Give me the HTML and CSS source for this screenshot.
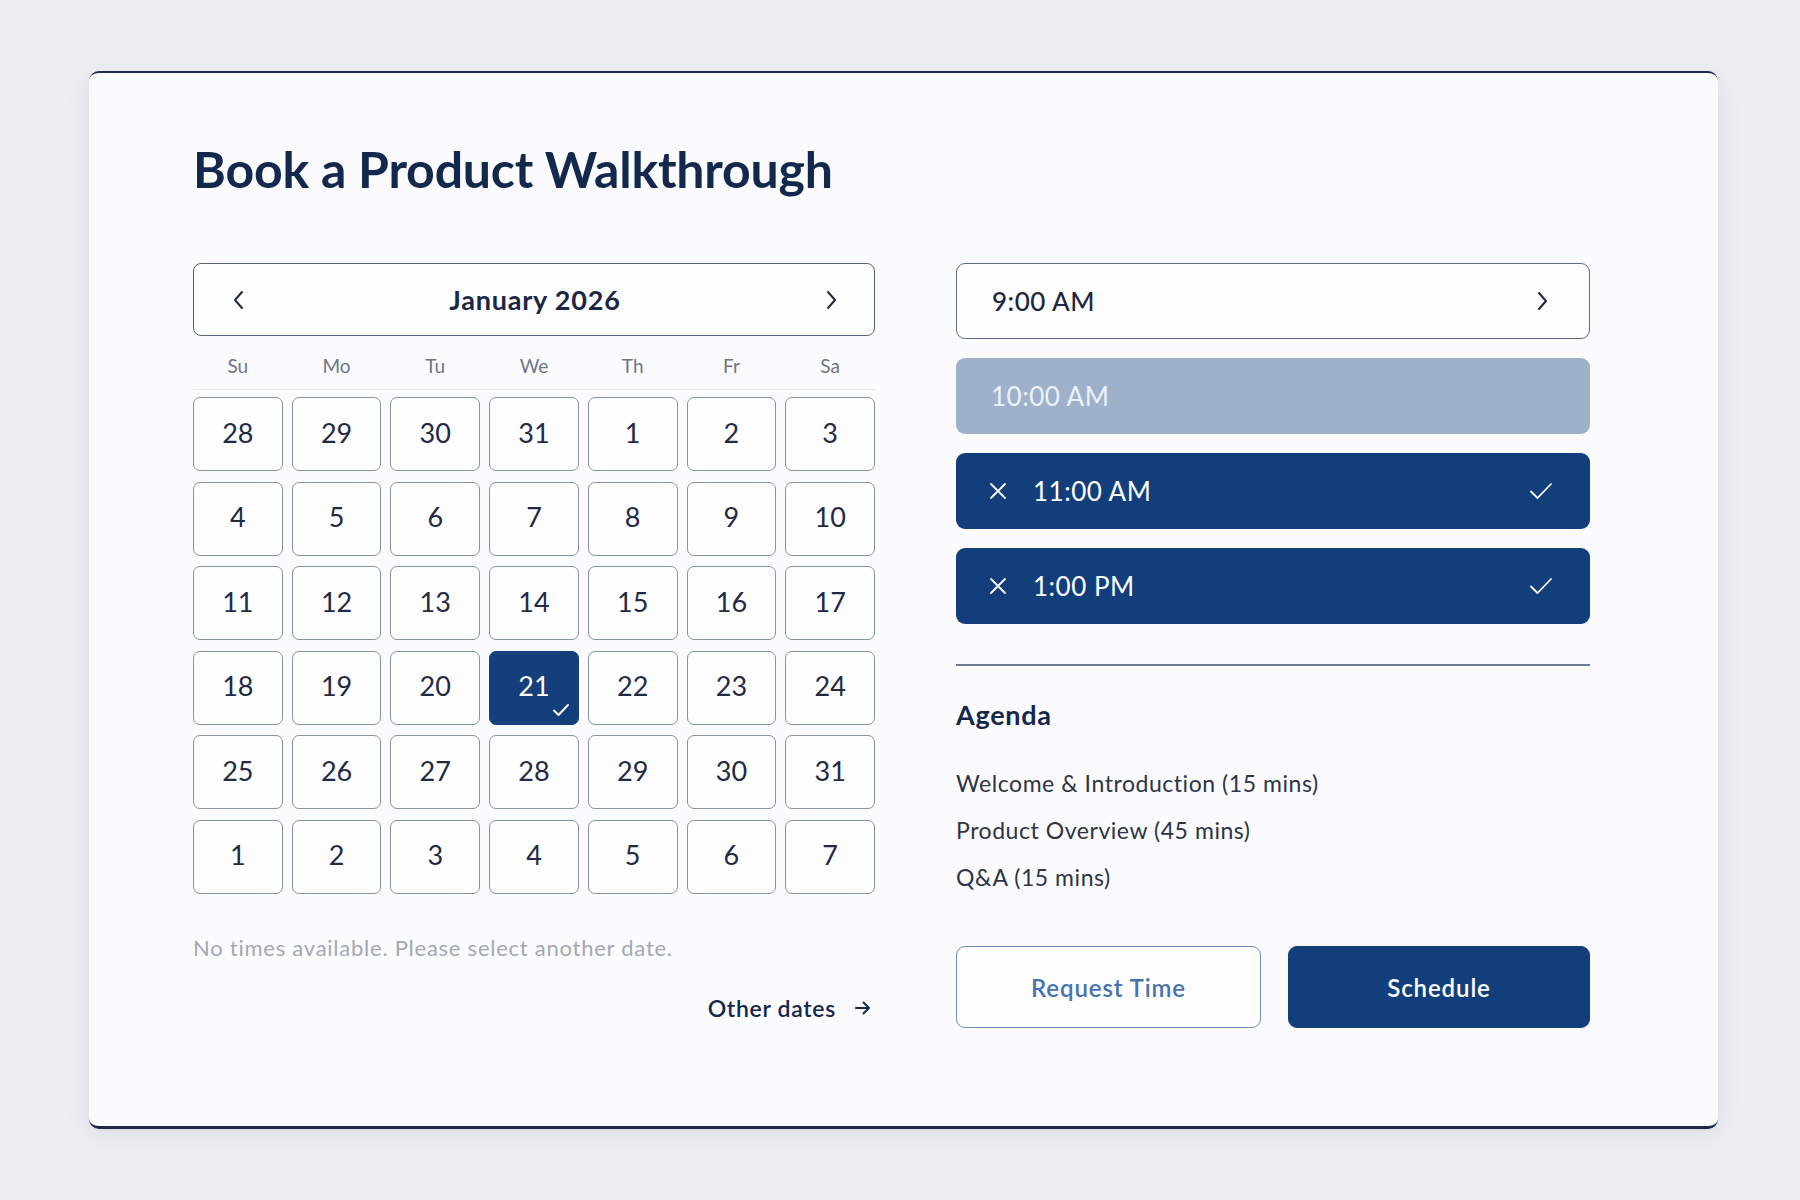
FILE: index.html
```html
<!DOCTYPE html>
<html lang="en">
<head>
<meta charset="utf-8">
<title>Book a Product Walkthrough</title>
<link rel="stylesheet" href="styles.css">
</head>
<body>
<div class="page">
  <section class="card">
    <h1 class="title">Book a Product Walkthrough</h1>
    <div class="main">
      <div class="cal-col">
        <div class="cal-head">
          <svg class="chev" width="13" height="22" viewBox="0 0 13 22"><path d="M10 3 L3 11 L10 19" fill="none" stroke="#1c2740" stroke-width="2" stroke-linecap="round" stroke-linejoin="round"/></svg>
          <span class="month">January 2026</span>
          <svg class="chev" width="13" height="22" viewBox="0 0 13 22"><path d="M3 3 L10 11 L3 19" fill="none" stroke="#1c2740" stroke-width="2" stroke-linecap="round" stroke-linejoin="round"/></svg>
        </div>
        <div class="weekdays">
          <span>Su</span><span>Mo</span><span>Tu</span><span>We</span><span>Th</span><span>Fr</span><span>Sa</span>
        </div>
        <div class="days">
          <div class="day">28</div><div class="day">29</div><div class="day">30</div><div class="day">31</div><div class="day">1</div><div class="day">2</div><div class="day">3</div>
          <div class="day">4</div><div class="day">5</div><div class="day">6</div><div class="day">7</div><div class="day">8</div><div class="day">9</div><div class="day">10</div>
          <div class="day">11</div><div class="day">12</div><div class="day">13</div><div class="day">14</div><div class="day">15</div><div class="day">16</div><div class="day">17</div>
          <div class="day">18</div><div class="day">19</div><div class="day">20</div>
          <div class="day selected">21
            <svg class="day-check" width="18" height="14" viewBox="0 0 18 14"><path d="M2 7.5 L6.5 12 L16 2" fill="none" stroke="#ffffff" stroke-width="1.9" stroke-linecap="round" stroke-linejoin="round"/></svg>
          </div>
          <div class="day">22</div><div class="day">23</div><div class="day">24</div>
          <div class="day">25</div><div class="day">26</div><div class="day">27</div><div class="day">28</div><div class="day">29</div><div class="day">30</div><div class="day">31</div>
          <div class="day">1</div><div class="day">2</div><div class="day">3</div><div class="day">4</div><div class="day">5</div><div class="day">6</div><div class="day">7</div>
        </div>
        <p class="note">No times available. Please select another date.</p>
        <div class="other-row">
          <a class="other">Other dates
            <svg width="18" height="16" viewBox="0 0 18 16"><path d="M2 8 H15 M9.5 2.5 L15 8 L9.5 13.5" fill="none" stroke="#13284d" stroke-width="2" stroke-linecap="round" stroke-linejoin="round"/></svg>
          </a>
        </div>
      </div>
      <div class="side-col">
        <div class="slots">
          <div class="slot slot-open">
            <span class="slot-time">9:00 AM</span>
            <svg class="slot-right" width="13" height="22" viewBox="0 0 13 22"><path d="M3 3 L10 11 L3 19" fill="none" stroke="#1c2740" stroke-width="2" stroke-linecap="round" stroke-linejoin="round"/></svg>
          </div>
          <div class="slot slot-disabled">
            <span class="slot-time">10:00 AM</span>
          </div>
          <div class="slot slot-picked">
            <svg class="slot-x" width="18" height="18" viewBox="0 0 18 18"><path d="M2 2 L16 16 M16 2 L2 16" fill="none" stroke="#ffffff" stroke-width="1.8" stroke-linecap="round"/></svg>
            <span class="slot-time">11:00 AM</span>
            <svg class="slot-check" width="24" height="18" viewBox="0 0 24 18"><path d="M2 9.5 L8.5 16 L22 2" fill="none" stroke="#ffffff" stroke-width="1.8" stroke-linecap="round" stroke-linejoin="round"/></svg>
          </div>
          <div class="slot slot-picked">
            <svg class="slot-x" width="18" height="18" viewBox="0 0 18 18"><path d="M2 2 L16 16 M16 2 L2 16" fill="none" stroke="#ffffff" stroke-width="1.8" stroke-linecap="round"/></svg>
            <span class="slot-time">1:00 PM</span>
            <svg class="slot-check" width="24" height="18" viewBox="0 0 24 18"><path d="M2 9.5 L8.5 16 L22 2" fill="none" stroke="#ffffff" stroke-width="1.8" stroke-linecap="round" stroke-linejoin="round"/></svg>
          </div>
        </div>
        <hr class="divider">
        <h2 class="agenda-title">Agenda</h2>
        <ul class="agenda">
          <li>Welcome &amp; Introduction (15 mins)</li>
          <li>Product Overview (45 mins)</li>
          <li>Q&amp;A (15 mins)</li>
        </ul>
        <div class="actions">
          <button class="btn btn-outline">Request Time</button>
          <button class="btn btn-solid">Schedule</button>
        </div>
      </div>
    </div>
  </section>
</div>
</body>
</html>
```

FILE: styles.css
```css
* { box-sizing: border-box; }

html, body {
  margin: 0;
  padding: 0;
}

body {
  background: #eceef2;
  font-family: Lato, "Open Sans", "Liberation Sans", sans-serif;
  color: #1c2740;
  width: 1800px;
  height: 1200px;
  overflow: hidden;
}

.page {
  padding: 71px 0 0 89px;
}

.card {
  width: 1629px;
  height: 1058px;
  background: #fbfbfd;
  border-top: 2px solid #1d2c4c;
  border-bottom: 3px solid #1d2c4c;
  border-radius: 10px;
  box-shadow: 0 6px 28px rgba(30, 40, 70, 0.07), 0 1px 3px rgba(30, 40, 70, 0.05);
  padding: 66px 129px 0 104px;
}

.title {
  margin: 0;
  font-size: 50px;
  line-height: 60px;
  font-weight: 700;
  color: #13284d;
  letter-spacing: -0.2px;
}

.main {
  display: grid;
  grid-template-columns: 682px 634px;
  column-gap: 81px;
  margin-top: 64px;
}

/* Calendar */
.cal-head {
  height: 73px;
  border: 1.5px solid #56627a;
  border-radius: 8px;
  display: flex;
  align-items: center;
  justify-content: space-between;
  padding: 0 36px 0 38px;
  background: #fdfdfe;
}

.month {
  font-size: 27px;
  font-weight: 700;
  letter-spacing: 0.8px;
  color: #1a2745;
}

.chev { display: block; }

.weekdays {
  display: grid;
  grid-template-columns: repeat(7, 1fr);
  column-gap: 9px;
  margin-top: 18px;
  padding-bottom: 11px;
  border-bottom: 1.5px solid #e4e7ed;
  font-size: 19px;
  line-height: 24px;
  color: #6d7587;
  text-align: center;
}

.days {
  display: grid;
  grid-template-columns: repeat(7, 1fr);
  grid-auto-rows: 74px;
  column-gap: 9px;
  row-gap: 10.5px;
  margin-top: 7px;
}

.day {
  position: relative;
  border: 1.2px solid #8592a8;
  border-radius: 7px;
  background: #fdfdfe;
  display: flex;
  align-items: center;
  justify-content: center;
  padding-bottom: 4px;
  font-size: 27px;
  color: #1f2a44;
}

.day.selected {
  background: #143f7b;
  border-color: #143f7b;
  color: #ffffff;
}

.day-check {
  position: absolute;
  right: 8px;
  bottom: 7px;
}

.note {
  margin: 42px 0 0;
  font-size: 22px;
  line-height: 24px;
  letter-spacing: 0.75px;
  color: #a2a8b5;
}

.other-row {
  display: flex;
  justify-content: flex-end;
  margin-top: 35px;
  padding-right: 3px;
}

.other {
  display: flex;
  align-items: center;
  gap: 18px;
  font-size: 23px;
  line-height: 26px;
  font-weight: 600;
  letter-spacing: 0.7px;
  color: #13284d;
}

/* Side column */
.slots {
  display: flex;
  flex-direction: column;
  gap: 19px;
}

.slot {
  height: 76px;
  border-radius: 9px;
  display: flex;
  align-items: center;
  padding: 0 37px 0 35px;
  font-size: 26px;
  letter-spacing: 0.5px;
}

.slot-time { flex: 1; }

.slot-open {
  border: 1.5px solid #5f6b83;
  background: #fdfdfe;
  color: #1c2740;
  font-weight: 500;
  padding-right: 40px;
}

.slot-disabled {
  background: #9eb1cb;
  color: #eef2f8;
}

.slot-picked {
  background: #123f7c;
  color: #ffffff;
  padding-left: 33px;
}

.slot-x { margin-right: 26px; }

.divider {
  margin: 40px 0 0;
  border: 0;
  height: 2px;
  background: #6e7c94;
}

.agenda-title {
  margin: 33px 0 0;
  font-size: 27px;
  line-height: 32px;
  font-weight: 700;
  letter-spacing: 0.7px;
  color: #13284d;
}

.agenda {
  list-style: none;
  margin: 29px 0 0;
  padding: 0;
  font-size: 23px;
  line-height: 47px;
  letter-spacing: 0.55px;
  color: #2c3446;
}

.actions {
  display: grid;
  grid-template-columns: 305px 302px;
  column-gap: 27px;
  margin-top: 45px;
}

.btn {
  height: 82px;
  border-radius: 9px;
  font-family: inherit;
  font-size: 24px;
  font-weight: 600;
  letter-spacing: 0.9px;
}

.btn-outline {
  background: #fdfdfe;
  border: 1.5px solid #6a8ec0;
  color: #4673b0;
}

.btn-solid {
  background: #123f7c;
  border: 1.5px solid #123f7c;
  color: #ffffff;
}
```
